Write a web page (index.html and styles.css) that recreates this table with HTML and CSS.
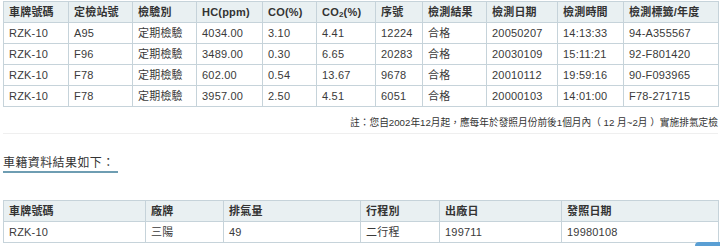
FILE: index.html
```html
<!DOCTYPE html>
<html lang="zh-Hant">
<head>
<meta charset="utf-8">
<title>排氣檢測結果</title>
<link rel="stylesheet" href="styles.css">
</head>
<body>
<div class="page">
  <table class="grid grid-top">
    <colgroup>
      <col style="width:65px"><col style="width:64px"><col style="width:64px"><col style="width:66px"><col style="width:54px"><col style="width:59px"><col style="width:47px"><col style="width:64px"><col style="width:71px"><col style="width:66px"><col style="width:95px">
    </colgroup>
    <thead>
      <tr><th>車牌號碼</th><th>定檢站號</th><th>檢驗別</th><th>HC(ppm)</th><th>CO(%)</th><th>CO<sub>2</sub>(%)</th><th>序號</th><th>檢測結果</th><th>檢測日期</th><th>檢測時間</th><th>檢測標籤/年度</th></tr>
    </thead>
    <tbody>
      <tr><td>RZK-10</td><td>A95</td><td>定期檢驗</td><td>4034.00</td><td>3.10</td><td>4.41</td><td>12224</td><td>合格</td><td>20050207</td><td>14:13:33</td><td>94-A355567</td></tr>
      <tr><td>RZK-10</td><td>F96</td><td>定期檢驗</td><td>3489.00</td><td>0.30</td><td>6.65</td><td>20283</td><td>合格</td><td>20030109</td><td>15:11:21</td><td>92-F801420</td></tr>
      <tr><td>RZK-10</td><td>F78</td><td>定期檢驗</td><td>602.00</td><td>0.54</td><td>13.67</td><td>9678</td><td>合格</td><td>20010112</td><td>19:59:16</td><td>90-F093965</td></tr>
      <tr><td>RZK-10</td><td>F78</td><td>定期檢驗</td><td>3957.00</td><td>2.50</td><td>4.51</td><td>6051</td><td>合格</td><td>20000103</td><td>14:01:00</td><td>F78-271715</td></tr>
    </tbody>
  </table>
  <p class="note">註：您自2002年12月起，應每年於發照月份前後1個月內（ 12 月~2月 ）實施排氣定檢</p>
  <hr class="divider">
  <h2 class="section-title">車籍資料結果如下：</h2>
  <table class="grid grid-bottom">
    <colgroup>
      <col style="width:142px"><col style="width:78px"><col style="width:137px"><col style="width:79px"><col style="width:122px"><col style="width:157px">
    </colgroup>
    <thead>
      <tr><th>車牌號碼</th><th>廠牌</th><th>排氣量</th><th>行程別</th><th>出廠日</th><th>發照日期</th></tr>
    </thead>
    <tbody>
      <tr><td>RZK-10</td><td>三陽</td><td>49</td><td>二行程</td><td>199711</td><td>19980108</td></tr>
    </tbody>
  </table>
</div>
<a class="to-top" href="#" aria-label="回到頂端"></a>
</body>
</html>
```
FILE: styles.css
```css
html, body {
  margin: 0;
  padding: 0;
  background: #ffffff;
}
body {
  font-family: "Liberation Sans", Arial, "Noto Sans CJK TC", sans-serif;
  color: #333333;
  font-size: 11px;
  overflow: hidden;
}
.page {
  padding: 1px 2px 0 3px;
}
.grid {
  border-collapse: collapse;
  table-layout: fixed;
  width: 715px;
}
.grid th,
.grid td {
  border: 1px solid #c6d3da;
  height: 20px;
  padding: 0 5px;
  text-align: left;
  vertical-align: middle;
  white-space: nowrap;
  line-height: 13px;
  letter-spacing: 0.2px;
}
.grid th {
  background: #e9f0f2;
  font-weight: bold;
  color: #333333;
}
.grid td {
  background: #ffffff;
  color: #3a3a3a;
}
.grid sub {
  font-size: 8px;
  vertical-align: -1px;
  line-height: 0;
}
.note {
  margin: 0;
  padding-top: 6px;
  width: 715px;
  text-align: right;
  font-size: 9.7px;
  line-height: 20px;
  color: #333333;
  white-space: nowrap;
}
.divider {
  margin: 0;
  border: 0;
  border-top: 1px solid #efefef;
  width: 715px;
}
.section-title {
  display: inline-block;
  margin: 22px 0 0 0;
  padding: 0 3px 0 0;
  font-size: 12px;
  font-weight: normal;
  letter-spacing: 0.4px;
  line-height: 15px;
  color: #333333;
  border-bottom: 2px solid #6e9db2;
}
.grid-bottom {
  margin-top: 27px;
}
.to-top {
  position: fixed;
  left: 695px;
  top: 242px;
  width: 40px;
  height: 40px;
  border-radius: 4px;
  background: #5a9fd4;
}
```
